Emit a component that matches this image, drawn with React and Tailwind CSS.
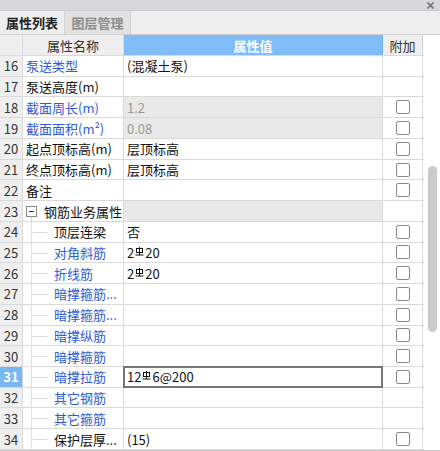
import React from "react";

const BLUE = "text-[#2f5bd9]";

function Rebar() {
  return (
    <svg width="9" height="9" viewBox="0 0 9 9" className="inline-block align-top mt-[1px] mx-[1px]">
      <rect x="1.5" y="1.5" width="6" height="4" fill="none" stroke="#111" strokeWidth="1" />
      <line x1="4.5" y1="0" x2="4.5" y2="8" stroke="#111" strokeWidth="1" />
      <line x1="0.5" y1="8" x2="8.5" y2="8" stroke="#111" strokeWidth="1" />
    </svg>
  );
}

function Check() {
  return <div className="w-[14px] h-[14px] border border-[#8a8a8a] rounded-[2px] bg-white" />;
}

const rows = [
  { n: 16, name: "泵送类型", blue: true, val: "(混凝土泵)" },
  { n: 17, name: "泵送高度(m)", val: "" },
  { n: 18, name: "截面周长(m)", blue: true, val: "1.2", gray: true, cb: true },
  { n: 19, name: "截面面积(m²)", blue: true, val: "0.08", gray: true, cb: true },
  { n: 20, name: "起点顶标高(m)", val: "层顶标高", cb: true },
  { n: 21, name: "终点顶标高(m)", val: "层顶标高", cb: true },
  { n: 22, name: "备注", val: "", cb: true },
  { n: 23, group: true, name: "钢筋业务属性" },
  { n: 24, name: "顶层连梁", child: true, val: "否", cb: true },
  { n: 25, name: "对角斜筋", child: true, blue: true, val: ["2", "20"], cb: true },
  { n: 26, name: "折线筋", child: true, blue: true, val: ["2", "20"], cb: true },
  { n: 27, name: "暗撑箍筋...", child: true, blue: true, val: "", cb: true },
  { n: 28, name: "暗撑箍筋...", child: true, blue: true, val: "", cb: true },
  { n: 29, name: "暗撑纵筋", child: true, blue: true, val: "", cb: true },
  { n: 30, name: "暗撑箍筋", child: true, blue: true, val: "", cb: true },
  { n: 31, name: "暗撑拉筋", child: true, blue: true, val: ["12", "6@200"], cb: true, sel: true },
  { n: 32, name: "其它钢筋", child: true, blue: true, val: "" },
  { n: 33, name: "其它箍筋", child: true, blue: true, val: "" },
  { n: 34, name: "保护层厚...", child: true, val: "(15)", cb: true },
];

function Row({ r }) {
  const val = Array.isArray(r.val) ? (
    <span>
      {r.val[0]}
      <Rebar />
      {r.val[1]}
    </span>
  ) : (
    r.val
  );
  return (
    <div className="flex h-[21px] border-b border-[#dadada]">
      <div
        className={
          "w-[23px] shrink-0 border-r border-[#dadada] flex items-center justify-center " +
          (r.sel ? "bg-[#7ab8f5] text-white font-bold" : "bg-[#efefef] text-[#333]")
        }
      >
        {r.n}
      </div>
      <div className="w-[101px] shrink-0 border-r border-[#dadada] bg-white relative flex items-center">
        {r.group ? (
          <>
            <div className="absolute left-[8px] top-[16px] bottom-[-1px] w-px bg-[#d8d8d8]" />
            <div className="ml-[3px] w-[11px] h-[11px] border border-[#8a8a8a] flex items-center justify-center bg-white">
              <div className="w-[5px] h-px bg-[#333]" />
            </div>
            <span className="ml-[7px] text-[#111]">{r.name}</span>
          </>
        ) : r.child ? (
          <>
            <div className="absolute left-[8px] top-[-1px] bottom-[-1px] w-px bg-[#e2e2e2]" />
            <div className="absolute left-[10px] top-[10px] w-[14px] h-px bg-[#d8d8d8]" />
            <span className={"ml-[31px] whitespace-nowrap " + (r.blue ? BLUE : "text-[#111]")}>{r.name}</span>
          </>
        ) : (
          <span className={"ml-[3px] whitespace-nowrap " + (r.blue ? BLUE : "text-[#111]")}>{r.name}</span>
        )}
      </div>
      <div
        className={
          "w-[259px] shrink-0 border-r border-[#dadada] relative flex items-center whitespace-nowrap pl-[3px] " +
          (r.gray || r.group ? "bg-[#e9e9e9] text-[#9a9a9a]" : "bg-white text-[#111]")
        }
      >
        {r.sel ? (
          <div className="absolute left-[-1px] right-[-1px] top-[-1px] bottom-[-1px] border-2 border-[#767676]" />
        ) : null}
        {val}
      </div>
      <div className="w-[40px] shrink-0 border-r border-[#dadada] bg-white flex items-center justify-center">
        {r.cb ? <Check /> : null}
      </div>
    </div>
  );
}

export default function App() {
  return (
    <div
      className="w-[440px] h-[451px] overflow-hidden bg-white flex flex-col text-[13px] leading-none border-b border-[#c8c8c8]"
      style={{ fontFamily: '"Noto Sans CJK SC", "Noto Sans", sans-serif' }}
    >
      <div className="h-[11px] shrink-0 bg-[#d7d8dc] border-b border-[#c9cacd] flex justify-end items-center pr-[6px]">
        <svg width="7" height="7" viewBox="0 0 7 7">
          <line x1="0.5" y1="0.5" x2="6.5" y2="6.5" stroke="#777" strokeWidth="1.6" />
          <line x1="6.5" y1="0.5" x2="0.5" y2="6.5" stroke="#777" strokeWidth="1.6" />
        </svg>
      </div>
      <div className="h-[23px] shrink-0 bg-[#eeeeee] flex items-end">
        <div className="h-[23px] w-[65px] flex items-center justify-center font-bold text-[#222] border-r border-[#d4d4d4]">
          属性列表
        </div>
        <div className="h-[23px] w-[66px] flex items-center justify-center font-bold text-[#8c8c8c] bg-[#e2e2e2] border-r border-[#d0d0d0]">
          图层管理
        </div>
      </div>
      <div className="flex flex-1 min-h-0 border-t border-[#d0d0d0]">
        <div className="w-[424px] shrink-0 flex flex-col">
          <div className="flex h-[21px] shrink-0 border-b border-[#dadada]">
            <div className="w-[23px] shrink-0 border-r border-[#dadada] bg-[#efefef]" />
            <div className="w-[101px] shrink-0 border-r border-[#dadada] bg-[#efefef] flex items-center justify-center text-[#333]">
              属性名称
            </div>
            <div className="w-[259px] shrink-0 bg-[#80bcf7] border-r border-[#7ab0e8] flex items-center justify-center text-white font-bold">
              属性值
            </div>
            <div className="w-[40px] shrink-0 border-r border-[#d0d0d0] bg-[#efefef] flex items-center justify-center text-[#333]">
              附加
            </div>
          </div>
          {rows.map((r) => (
            <Row key={r.n} r={r} />
          ))}
        </div>
        <div className="flex-1 bg-white flex flex-col items-center">
          <div className="h-[131px] shrink-0" />
          <div className="w-[9px] h-[166px] rounded-full bg-[#cacaca]" />
        </div>
      </div>
    </div>
  );
}
